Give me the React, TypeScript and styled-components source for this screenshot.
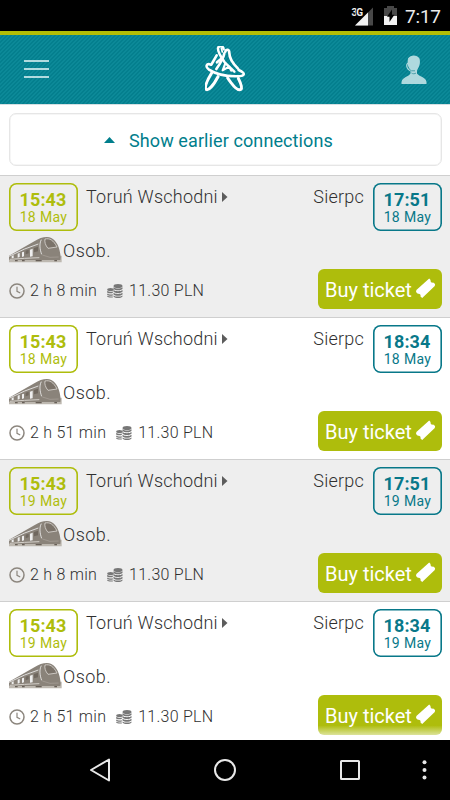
import React from "react";
import styled, { createGlobalStyle } from "styled-components";

const Global = createGlobalStyle`
  * { box-sizing: border-box; }
  body { margin: 0; background: #fff; font-family: Roboto, sans-serif; }
  svg { display: block; flex: none; }
`;

const TEAL = "#007e8c";
const LIME = "#aebd0c";

const Screen = styled.div`
  width: 450px;
  height: 800px;
  display: flex;
  flex-direction: column;
  overflow: hidden;
  background: #fff;
`;

const StatusBar = styled.div`
  height: 31px;
  flex: none;
  background: #000;
  display: flex;
  align-items: center;
  justify-content: flex-end;
  padding-right: 10px;
  color: #ececec;
`;

const Clock = styled.span`
  margin-left: 8px;
  padding-top: 2px;
  font-size: 19px;
  line-height: 24px;
  font-weight: 400;
  width: 35px;
  white-space: nowrap;
  letter-spacing: -0.2px;
`;

const Header = styled.header`
  height: 73px;
  flex: none;
  border-top: 4px solid #b2bd05;
  padding: 0 23px 0 24px;
  display: flex;
  align-items: center;
  justify-content: space-between;
  background: linear-gradient(135deg, #0c8998 25%, #047f8e 25% 50%, #0c8998 50% 75%, #047f8e 75%) 0 0 / 4px 4px;
`;

const MenuButton = styled.button`
  width: 26px;
  height: 18px;
  padding: 0;
  border: 0;
  background: none;
  display: flex;
  flex-direction: column;
  justify-content: space-between;
  margin-top: -2px;
`;

const MenuLine = styled.span`
  height: 2px;
  width: 25px;
  background: #b0dbdf;
`;

const Content = styled.main`
  height: 636px;
  flex: none;
  overflow: hidden;
  border-top: 1px solid #d5dfe2;
`;

const EarlierPanel = styled.div`
  height: 70px;
  padding: 8px 8.5px 0;
`;

const EarlierButton = styled.button`
  width: 433px;
  height: 53px;
  border: 1px solid #e6e6e6;
  box-shadow: inset 0 0 0 0.5px #ededed;
  border-radius: 7px;
  background: #fff;
  color: ${TEAL};
  font: 400 18px/24px Roboto, sans-serif;
  letter-spacing: 0.1px;
  display: flex;
  align-items: center;
  padding: 2px 0 0 94.5px;
  gap: 14px;
  svg { margin-top: -1px; }
`;

const Row = styled.section<{ $shaded: boolean }>`
  height: 142px;
  border-top: 1px solid #cfcfcf;
  background: ${(p) => (p.$shaded ? "#eeeeee" : "#fff")};
  padding: 7px 8px 0;
  color: #303030;
`;

const Route = styled.div`
  display: flex;
  height: 49px;
`;

const TimeBox = styled.div<{ $color: string }>`
  width: 69px;
  height: 48px;
  margin: 0 0.5px;
  flex: none;
  border-radius: 7.5px;
  box-shadow: inset 0 0 0 1.6px ${(p) => p.$color};
  color: ${(p) => p.$color};
  text-align: center;
  padding-top: 8px;
`;

const Time = styled.div`
  font-size: 18px;
  line-height: 18px;
  font-weight: 700;
  letter-spacing: 0.15px;
`;

const Day = styled.div`
  font-size: 14px;
  line-height: 17px;
  padding-left: 1px;
  letter-spacing: 0.35px;
`;

const Station = styled.div<{ $end?: boolean }>`
  font-size: 18px;
  line-height: 24px;
  letter-spacing: 0.23px;
  display: flex;
  align-items: center;
  height: 27px;
  font-weight: 300;
  gap: 4px;
  margin-left: ${(p) => (p.$end ? "auto" : "8px")};
  margin-right: ${(p) => (p.$end ? "8px" : "0")};
`;

const Train = styled.div`
  display: flex;
  height: 35px;
  padding: 5px 0 0 1px;
  font-size: 18px;
  line-height: 28px;
  font-weight: 300;
  letter-spacing: 0.45px;
  gap: 1px;
`;

const Summary = styled.div`
  display: flex;
  align-items: center;
  height: 47px;
  padding-left: 1px;
  font-size: 16px;
`;

const Detail = styled.span<{ $gap: number }>`
  margin-left: ${(p) => p.$gap}px;
  letter-spacing: 0.25px;
  font-weight: 300;
`;

const Coins = styled.span`
  margin-left: 10px;
`;

const BuyButton = styled.button<{ $faded: boolean }>`
  margin: 0 0 4px auto;
  width: 124px;
  height: 40px;
  border: 0;
  border-radius: 6px;
  padding: 2px 0 0 7px;
  color: #fff;
  font: 400 20px/24px Roboto, sans-serif;
  display: flex;
  align-items: center;
  gap: 3px;
  white-space: nowrap;
  background: ${(p) => (p.$faded ? `linear-gradient(${LIME} 76%, #dce39b 100%)` : LIME)};
  svg { margin-top: -3px; }
`;

const NavBar = styled.nav`
  height: 60px;
  flex: none;
  background: #000;
  display: flex;
  align-items: center;
  padding-left: 88px;
`;

const IconSlot = styled.span<{ $gap: number }>`
  margin-left: ${(p) => p.$gap}px;
`;

const SignalIcon = () => (
  <svg width="25" height="24" viewBox="0 0 25 24">
    <path d="M22 3.500v18H4z" fill="#484848" />
    <path d="M17 8.500v13H4z" fill="#f2f2f2" />
    <text x="0.500" y="11.500" fontFamily="Roboto" fontWeight="700" fontSize="10" fill="#eee" stroke="#000" strokeWidth="2" paintOrder="stroke" textLength="11.500">3G</text>
  </svg>
);

const BatteryIcon = () => (
  <svg width="13" height="19" viewBox="0 0 13 19">
    <path d="M0 2h3V0h7v2h3v8H0z" fill="#484848" />
    <path d="M0 10h13v9H0z" fill="#f2f2f2" />
    <path d="M8 3.500v5.200h2.400L5.500 16v-5.200H3z" fill="#000" />
  </svg>
);

const Logo = () => (
  <svg width="42" height="48" viewBox="45 30 126 144" fill="none" stroke="#fff" strokeLinecap="round" strokeLinejoin="round">
    <path d="M101 40C100 29 86 27 84 37C83 47 92 62 104 79L133 107" strokeWidth="7.500" />
    <path d="M94 37L97 48" strokeWidth="5" />
    <path d="M106 47C108 38 118 40 118 51C118 66 126 80 144 98" strokeWidth="8" />
    <path d="M103 52C101 66 90 83 79 99" strokeWidth="8" />
    <path d="M80 58L64 86M93 69L81 79" strokeWidth="8" />
    <path d="M62 86C50 81 44 91 57 101C77 114 112 122 143 121C166 120 168 112 146 102" strokeWidth="7.500" />
    <path d="M106 82L98 103L117 92L124 104" strokeWidth="6.500" />
    <path d="M65 111C51 134 43 153 48 160C56 165 70 148 84 122" strokeWidth="9" />
    <path d="M113 126C129 150 144 166 153 160C158 154 151 139 145 127" strokeWidth="9" />
  </svg>
);

const PersonIcon = () => (
  <svg width="26" height="30" viewBox="0 0 26 30">
    <path d="M7 3.500C9.500-.5 16-.8 18.500 3.500c.8 3 .6 6.500-1.500 10l-1 2v3c2 3 9 3.500 9.500 8.500v2H.5v-2c.8-5 7.500-5.500 9-8.500v-3l-2-3.500C6.500 10 6.500 6.500 7 3.500z" fill="#afd9de" />
    <path d="M7 8c-2 1.300-1.500 4.500.5 6.500l2.500 1.300" stroke="#afd9de" strokeWidth="1.300" fill="none" />
    <path d="M8.500 14.500l2 1.300h3.500M10.500 18c1 1 3.500 1 4.500 0" stroke="#4b9fa9" strokeWidth="1" fill="none" />
  </svg>
);

const TrainIcon = () => (
  <svg width="53" height="26" viewBox="28 37 159 78">
    <path d="M28 101L110 95L186 93V113H28z" fill="#bdb8b0" />
    <path d="M28 93L104 50C122 38 143 34 155 40C172 49 181 70 183 98L182 106H28z" fill="#8a837a" />
    <path d="M28 95L75 73L116 58" fill="none" stroke="#eee" strokeWidth="2.500" />
    <path d="M36 94l6-2v8l-6 1zM54 87l6-2v12l-6 2zM67 83l6-2v14l-6 2zM91 75l8-3v23l-8 1z" fill="#eee" />
    <path d="M78 78l9-3v11l-9 3zM103 70l12-4v14l-12 3z" fill="#70685f" />
    <path d="M125 45C118 57 121 76 126 89" fill="none" stroke="#eee" strokeWidth="2.500" />
    <path d="M136 43C150 40 161 46 172 67L145 71C137 62 134 51 136 43z" fill="#7b736a" stroke="#d8d5d0" strokeWidth="2.500" />
    <path d="M128 91L151 98L177 97" fill="none" stroke="#aaa39b" strokeWidth="2" />
    <path d="M30 104L75 101L119 99" fill="none" stroke="#d4d0ca" strokeWidth="3" />
    <path d="M46 108h8M67 108h8M108 108h18M164 108h8" stroke="#675f57" strokeWidth="4" />
  </svg>
);

const ClockIcon = () => (
  <svg width="16" height="16" viewBox="0 0 16 16" fill="none" stroke="#8c867e" strokeLinecap="round">
    <circle cx="8" cy="8" r="7" strokeWidth="1.500" />
    <path d="M8 4v4.300l2.800 1.500" strokeWidth="1.200" />
  </svg>
);

const CoinsIcon = () => (
  <svg width="16" height="14" viewBox="0 0 16 14" fill="#777">
    <ellipse cx="11" cy="2" rx="4.500" ry="2" />
    <path d="M6.500 3.300c2 1.600 7 1.600 9 0V5c-2 1.700-7 1.700-9 0zM6.500 6c2 1.600 7 1.600 9 0v1.700c-2 1.700-7 1.700-9 0zM6.500 8.700c2 1.600 7 1.600 9 0v1.700c-2 1.700-7 1.700-9 0zM6.500 11.400c2 1.600 7 1.600 9 0v1c-2 2.100-7 2.100-9 0z" />
    <ellipse cx="3.500" cy="5.500" rx="3.300" ry="1.600" />
    <path d="M.2 6.800c1.400 1 3.800 1.300 5.600.8v1.500c-2 .5-4.500.3-5.600-.7zM.2 9.400c1.400 1 3.800 1.300 5.600.8v1.300c-2 .5-4.500.3-5.600-.7zM.2 11.800c1.400.8 3.800 1 5.600.6v1c-2 .4-4.800.2-5.600-.8z" />
  </svg>
);

const TicketIcon = () => (
  <svg width="21" height="21" viewBox="0 0 21 21">
    <path d="M14.200.5l1.400 1.600c-.5 1.700.8 3 2.600 2.500l1.900 1.500-.3 1.900L7.200 20l-1.700-1.500c.6-1.900-.9-3.300-2.700-2.700L1 14.100l.4-2z" fill="#fff" />
  </svg>
);

const Stamp = ({ color, time, day }: { color: string; time: string; day: string }) => (
  <TimeBox $color={color}>
    <Time>{time}</Time>
    <Day>{day}</Day>
  </TimeBox>
);

const trips = [
  { day: "18 May", arrive: "17:51", duration: "2 h 8 min" },
  { day: "18 May", arrive: "18:34", duration: "2 h 51 min" },
  { day: "19 May", arrive: "17:51", duration: "2 h 8 min" },
  { day: "19 May", arrive: "18:34", duration: "2 h 51 min" },
];

export default function App() {
  return (
    <Screen>
      <Global />
      <StatusBar>
        <SignalIcon />
        <IconSlot $gap={8}><BatteryIcon /></IconSlot>
        <Clock>7:17</Clock>
      </StatusBar>
      <Header>
        <MenuButton aria-label="Menu"><MenuLine /><MenuLine /><MenuLine /></MenuButton>
        <Logo />
        <PersonIcon />
      </Header>
      <Content>
        <EarlierPanel>
          <EarlierButton>
            <svg width="11" height="6" viewBox="0 0 11 6"><path d="M0 6L5.500 0 11 6z" fill={TEAL} /></svg>
            Show earlier connections
          </EarlierButton>
        </EarlierPanel>
        {trips.map((t, i) => (
          <Row key={i} $shaded={i % 2 === 0}>
            <Route>
              <Stamp color={LIME} time="15:43" day={t.day} />
              <Station>
                Toruń Wschodni
                <svg width="6" height="10" viewBox="0 0 6 10"><path d="M0 0l5.500 5L0 10z" fill="#5c5c5c" /></svg>
              </Station>
              <Station $end>Sierpc</Station>
              <Stamp color="#087889" time={t.arrive} day={t.day} />
            </Route>
            <Train><TrainIcon />Osob.</Train>
            <Summary>
              <ClockIcon />
              <Detail $gap={5}>{t.duration}</Detail>
              <Coins><CoinsIcon /></Coins>
              <Detail $gap={6}>11.30 PLN</Detail>
              <BuyButton $faded={i === 3}>Buy ticket<TicketIcon /></BuyButton>
            </Summary>
          </Row>
        ))}
      </Content>
      <NavBar>
        <IconSlot $gap={0}>
          <svg width="24" height="26" viewBox="0 0 24 26"><path d="M21 2.500v21L3 13z" fill="none" stroke="#e8e8e8" strokeWidth="2" strokeLinejoin="round" /></svg>
        </IconSlot>
        <IconSlot $gap={101}>
          <svg width="24" height="24" viewBox="0 0 24 24"><circle cx="12" cy="12" r="10" fill="none" stroke="#e8e8e8" strokeWidth="2" /></svg>
        </IconSlot>
        <IconSlot $gap={102}>
          <svg width="22" height="20" viewBox="0 0 22 20"><rect x="2" y="1" width="18" height="18" rx=".5" fill="none" stroke="#e8e8e8" strokeWidth="2" /></svg>
        </IconSlot>
        <IconSlot $gap={61}>
          <svg width="6" height="20" viewBox="0 0 6 20" fill="#e8e8e8"><circle cx="2.500" cy="2.200" r="2" /><circle cx="2.500" cy="10" r="2" /><circle cx="2.500" cy="17.500" r="2" /></svg>
        </IconSlot>
      </NavBar>
    </Screen>
  );
}
